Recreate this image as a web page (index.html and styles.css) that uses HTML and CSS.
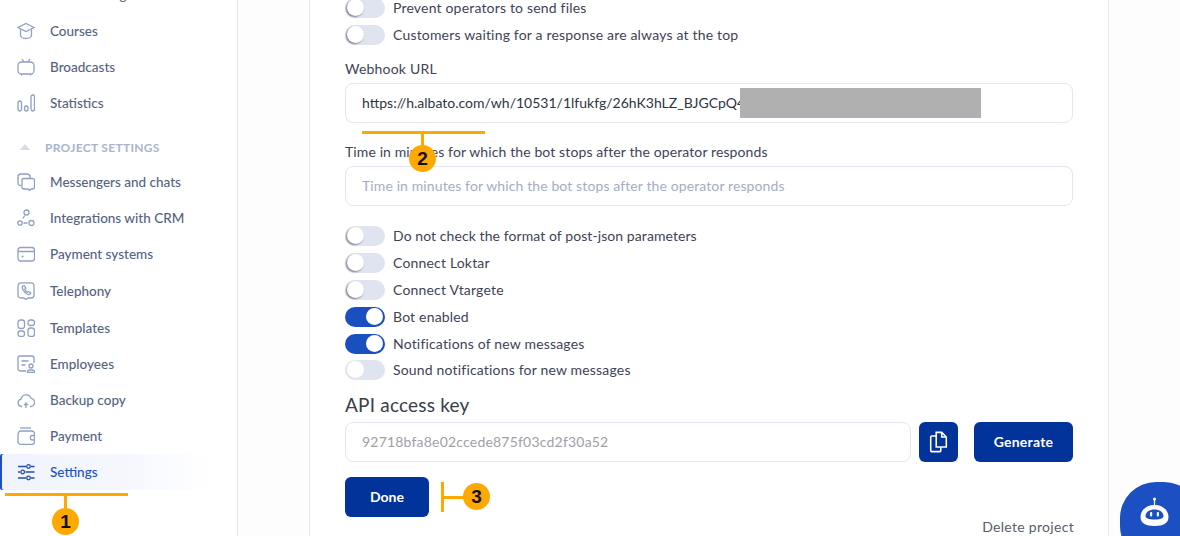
FILE: index.html
```html
<!DOCTYPE html>
<html lang="en">
<head>
<meta charset="utf-8">
<title>Project settings</title>
<link rel="stylesheet" href="styles.css">
</head>
<body>
<div class="page">
  <aside class="sidebar">
    <nav class="nav">
      <a class="item"><svg class="ico" viewBox="0 0 18 18"><rect x="1" y="-8" width="16" height="14" rx="3"/></svg><span>Mass mailing</span></a>
      <a class="item"><svg class="ico" viewBox="0 0 18 18"><path d="M9 1.500 17 5.500 9 9.500 1 5.500Z"/><path d="M3.500 7.500V13c0 2 2.500 3.500 5.500 3.500s5.500-1.500 5.500-3.500V7.500"/></svg><span>Courses</span></a>
      <a class="item"><svg class="ico" viewBox="0 0 18 18"><rect x="1" y="4" width="16" height="12" rx="3.500"/><path d="M5 1 7 4M13 1 11 4M4.500 16v1.500M13.500 16v1.500"/></svg><span>Broadcasts</span></a>
      <a class="item"><svg class="ico" viewBox="0 0 18 18"><rect x="1" y="7" width="3.500" height="10" rx="1.750"/><rect x="7.500" y="12" width="3.500" height="5" rx="1.750"/><rect x="14" y="1" width="3.500" height="16" rx="1.750"/></svg><span>Statistics</span></a>
      <div class="section"><span class="caret"></span><span>PROJECT SETTINGS</span></div>
      <a class="item"><svg class="ico" viewBox="0 0 18 18"><path d="M4 12.500H3a2 2 0 0 1-2-2V4a3 3 0 0 1 3-3h6a3 3 0 0 1 3 3v1.500"/><path d="M7 5.500h8.500a2 2 0 0 1 2 2V14a2 2 0 0 1-2 2H14l-1.500 1.500L11 16H7a2 2 0 0 1-2-2V7.500a2 2 0 0 1 2-2Z"/></svg><span>Messengers and chats</span></a>
      <a class="item"><svg class="ico" viewBox="0 0 18 18"><circle cx="9.500" cy="3.500" r="2.500"/><circle cx="3" cy="14" r="2.200"/><circle cx="14.500" cy="14" r="2.500"/><path d="M7.800 6.500 5.800 9.500M6.500 14h4"/></svg><span>Integrations with CRM</span></a>
      <a class="item"><svg class="ico" viewBox="0 0 18 18"><rect x="1" y="2.500" width="16.500" height="13.500" rx="2.500"/><path d="M1 6.500h16.500M4.500 11.500h2"/></svg><span>Payment systems</span></a>
      <a class="item item-gap"><svg class="ico" viewBox="0 0 18 18"><path d="M4 .8h10a3 3 0 0 1 3 3V13a3 3 0 0 1-3 3h-3l-2 1.500L7 16H4a3 3 0 0 1-3-3V3.800a3 3 0 0 1 3-3Z"/><path d="M6 3.800c-1 .7-1 2 0 4 1 2.200 3 4 5 4.700 1.500.3 2.500-.5 2.800-1.500l-2.300-1.500-1.200.8C9 9.500 8.300 8.500 7.800 7.200l1-1L7.500 3.800Z"/></svg><span>Telephony</span></a>
      <a class="item item-gap"><svg class="ico" viewBox="0 0 18 18"><rect x="1" y="1" width="6.500" height="8.500" rx="2.500"/><rect x="11" y="1" width="6.500" height="5.500" rx="2.500"/><rect x="1" y="12" width="6.500" height="5.500" rx="2.500"/><rect x="11" y="9" width="6.500" height="8.500" rx="2.500"/></svg><span>Templates</span></a>
      <a class="item"><svg class="ico" viewBox="0 0 18 18"><path d="M9 16H3a2 2 0 0 1-2-2V3a2 2 0 0 1 2-2h12a2 2 0 0 1 2 2v5"/><path d="M4.500 6h7M4.500 10h4"/><circle cx="14" cy="11" r="2"/><path d="M10.500 17.500v-.5a2 2 0 0 1 2-2h3a2 2 0 0 1 2 2v.5Z"/></svg><span>Employees</span></a>
      <a class="item"><svg class="ico" viewBox="0 0 18 18"><path d="M5 15.500H4.500a3.700 3.700 0 0 1-.5-7.300 5.300 5.300 0 0 1 10.200-.8 4.100 4.100 0 0 1-.2 8.100h-1"/><path d="M9 17v-6M6.800 13.500h4.400"/></svg><span>Backup copy</span></a>
      <a class="item"><svg class="ico" viewBox="0 0 18 18"><path d="M3 1h11"/><rect x="1" y="4" width="16.500" height="13.500" rx="3"/><path d="M17.500 8.500h-2a2 2 0 0 0 0 4.500h2"/></svg><span>Payment</span></a>
      <a class="item item-active"><svg class="ico" viewBox="0 0 18 18"><path d="M1 3.500h8M14 3.500h3.500M1 9h2M8.500 9h9M1 15h8M14 15h3.500"/><circle cx="11.500" cy="3.500" r="1.800"/><circle cx="5.700" cy="9" r="1.800"/><circle cx="11.500" cy="15" r="1.800"/></svg><span>Settings</span></a>
    </nav>
  </aside>
  <main class="main">
    <form class="card">
      <label class="toggle-row"><span class="toggle"></span><span>Prevent operators to send files</span></label>
      <label class="toggle-row"><span class="toggle"></span><span>Customers waiting for a response are always at the top</span></label>
      <div class="field field-first">
        <div class="field-label">Webhook URL</div>
        <div class="redact-wrap">
          <input class="input input-url" type="text" value="https://h.albato.com/wh/10531/1lfukfg/26hK3hLZ_BJGCpQ4">
          <span class="redact"></span>
        </div>
      </div>
      <div class="field field-next">
        <div class="field-label field-label-long">Time in minutes for which the bot stops after the operator responds</div>
        <input class="input" type="text" placeholder="Time in minutes for which the bot stops after the operator responds">
      </div>
      <div class="toggles">
        <label class="toggle-row toggle-tight"><span class="toggle"></span><span>Do not check the format of post-json parameters</span></label>
        <label class="toggle-row"><span class="toggle"></span><span>Connect Loktar</span></label>
        <label class="toggle-row"><span class="toggle"></span><span>Connect Vtargete</span></label>
        <label class="toggle-row"><span class="toggle toggle-on"></span><span>Bot enabled</span></label>
        <label class="toggle-row"><span class="toggle toggle-on"></span><span>Notifications of new messages</span></label>
        <label class="toggle-row toggle-last"><span class="toggle toggle-flat"></span><span>Sound notifications for new messages</span></label>
      </div>
      <h2 class="api-title">API access key</h2>
      <div class="api-row">
        <input class="input input-key" type="text" value="92718bfa8e02ccede875f03cd2f30a52" readonly>
        <button class="btn btn-icon" type="button" aria-label="Copy">
          <svg viewBox="0 0 20 24" width="19" height="22"><path d="M7.500 1.500h6l5 5v11h-11Z"/><path d="M13.500 1.500v5h5"/><path d="M7.500 5.500h-5a1 1 0 0 0-1 1v15a1 1 0 0 0 1 1h9a1 1 0 0 0 1-1v-4"/></svg>
        </button>
        <button class="btn btn-generate" type="button">Generate</button>
      </div>
      <button class="btn btn-done" type="button">Done</button>
      <div class="delete">Delete project</div>
    </form>
  </main>

  <div class="mark mark-1"><i class="mark-h"></i><i class="mark-v"></i><b class="dot">1</b></div>
  <div class="mark mark-2"><i class="mark-h"></i><i class="mark-v"></i><b class="dot">2</b></div>
  <div class="mark mark-3"><i class="mark-v"></i><i class="mark-h"></i><b class="dot">3</b></div>

  <div class="chat">
    <svg viewBox="0 0 30 30" width="30" height="30"><circle cx="14.500" cy="2" r="1.500"/><path d="M13.900 2h1.200v7h-1.200z"/><path d="M14.500 8c8 0 14 5 14 12 0 6-5 9-14 9s-14-3-14-9c0-7 6-12 14-12Z"/><path class="visor" d="M14.500 12.500c5 0 9 2.700 9 6.500 0 2.200-2.500 3.500-9 3.500s-9-1.300-9-3.500c0-3.800 4-6.500 9-6.500Z"/><rect x="10" y="15" width="2.200" height="4.500" rx="1.100"/><rect x="16.800" y="15" width="2.200" height="4.500" rx="1.100"/></svg>
  </div>
</div>
</body>
</html>
```
FILE: styles.css
```css
* { box-sizing: border-box; }
html, body { margin: 0; height: 100%; overflow: hidden; }
body { font-family: "Lato", "Noto Sans", sans-serif; background: #fdfdfe; color: #3d4356; }

.page { position: relative; display: flex; width: 1180px; height: 536px; overflow: hidden; }

.sidebar { flex: 0 0 238px; height: 536px; background: #fff; border-right: 1px solid #e4e6ec; overflow: hidden; }
.nav { margin-top: -23px; display: flex; flex-direction: column; }
.item { display: flex; align-items: center; height: 36px; flex: none; padding-left: 17px; gap: 15px; font-size: 13.5px; font-weight: 500; color: #56637f; }
.item-gap { margin-top: 1px; }
.ico { width: 18px; height: 18px; flex: none; fill: none; stroke: #8fa0c3; stroke-width: 1.3; overflow: hidden; }
.item-active { width: 215px; color: #1d50c4; background: linear-gradient(90deg, #f0f3fc, #f6f8fe 60%, #fff); box-shadow: inset 2px 0 0 #1d50c4; border-radius: 2px; }
.item-active .ico { stroke: #24509f; }
.section { display: flex; align-items: center; height: 20px; margin: 16px 0 7px; padding-left: 20px; gap: 15px; font-size: 12px; font-weight: 700; color: #a9b4cd; letter-spacing: .3px; }
.caret { width: 0; height: 0; border-left: 5.500px solid transparent; border-right: 5.500px solid transparent; border-bottom: 6px solid #d5dbe9; }

.main { flex: 1; padding-left: 71px; }
.card { width: 800px; min-height: 600px; margin-top: -2px; padding: 0 35px; background: #fff; border-left: 1px solid #e8e9ee; border-right: 1px solid #e8e9ee; }

.toggle-row { display: flex; align-items: center; gap: 8px; height: 20px; margin-bottom: 7px; font-size: 14px; letter-spacing: .18px; line-height: 20px; color: #3f4356; }
.toggle-tight { letter-spacing: .08px; }
.toggle { position: relative; width: 40px; height: 20px; flex: none; border-radius: 10px; background: #e0e4f0; }
.toggle::after { content: ""; position: absolute; left: 2px; top: 1px; width: 17px; height: 17px; border-radius: 50%; background: #fff; box-shadow: -1px 1px 2px rgba(30,30,40,.55); }
.toggle-on { background: #1a4fc0; }
.toggle-on::after { left: 21px; box-shadow: none; }
.toggle-flat::after { box-shadow: none; }
.toggle-last { margin-top: -1px; margin-bottom: 0; }

.field-first { margin-top: 14px; }
.field-next { margin-top: 19px; }
.field-label { height: 20px; margin-bottom: 4px; font-size: 14px; line-height: 20px; letter-spacing: .2px; color: #3f4356; }
.field-label-long { letter-spacing: .11px; }
.input { display: block; width: 100%; height: 40px; padding: 0 16px 2px; border: 1px solid #e4e6f0; border-radius: 8px; background: #fff; font: inherit; font-size: 14px; letter-spacing: .11px; color: #2f3444; outline: 0; }
.input::placeholder { color: #a5adc4; opacity: 1; }
.input-url { letter-spacing: 0; }
.redact-wrap { position: relative; }
.redact { position: absolute; left: 395px; top: 5px; width: 241px; height: 30px; background: #b0b0b0; }

.toggles { margin-top: 20px; }
.api-title { height: 20px; margin: 15px 0 7px; font-size: 19px; line-height: 20px; font-weight: 400; color: #3a3d4a; letter-spacing: .2px; }
.api-row { display: flex; height: 40px; }
.input-key { flex: 1; width: auto; min-width: 0; color: #a0a0a6; letter-spacing: .2px; }
.btn { display: flex; align-items: center; justify-content: center; height: 40px; padding: 0 0 2px; border: 0; border-radius: 6px; background: #02339a; color: #fff; font: inherit; font-size: 14px; font-weight: 700; }
.btn-icon { flex: 0 0 39px; margin-left: 8px; padding: 0; }
.btn-icon svg { fill: none; stroke: #fff; stroke-width: 1.700; }
.btn-generate { flex: 0 0 99px; margin-left: 16px; letter-spacing: .25px; }
.btn-done { width: 84px; margin-top: 15px; }
.delete { height: 20px; text-align: right; margin-right: -1px; font-size: 14px; line-height: 20px; letter-spacing: .3px; color: #5a5d68; }

.mark { position: absolute; }
.mark-h, .mark-v { position: absolute; background: #ffa800; }
.dot { position: absolute; display: flex; align-items: center; justify-content: center; width: 27px; height: 27px; border-radius: 50%; background: #ffa800; color: #111; font: 700 19px/1 "Liberation Sans", sans-serif; }
.mark-1 { left: 5px; top: 493px; width: 123px; height: 42px; }
.mark-2 { left: 362px; top: 131px; width: 123px; height: 42px; }
.mark-1 .mark-h, .mark-2 .mark-h { left: 0; top: 0; width: 123px; height: 3px; }
.mark-1 .mark-v, .mark-2 .mark-v { left: 59px; top: 0; width: 3px; height: 16px; }
.mark-1 .dot { left: 47px; top: 15px; }
.mark-2 .dot { left: 47px; top: 14px; }
.mark-3 { left: 441px; top: 482px; width: 50px; height: 30px; }
.mark-3 .mark-v { left: 0; top: 0; width: 3px; height: 30px; }
.mark-3 .mark-h { left: 0; top: 14px; width: 26px; height: 3px; }
.mark-3 .dot { left: 22px; top: 1px; }

.chat { position: absolute; left: 1120px; top: 482px; width: 80px; height: 80px; padding: 15px 0 0 20px; border-radius: 36px; background: #1c50c2; }
.chat svg { fill: #fff; display: block; }
.chat .visor { fill: #1c50c2; }
```
